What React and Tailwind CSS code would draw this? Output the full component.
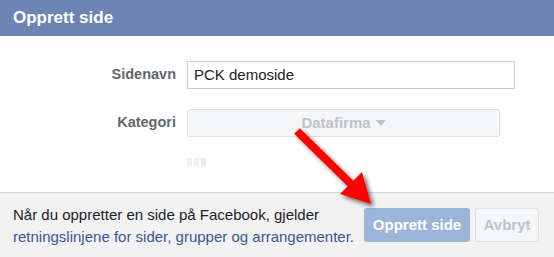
import React from 'react';

const Arrow = () => (
  <svg className="absolute left-0 top-0 pointer-events-none" width="554" height="257" viewBox="0 0 554 257">
    <defs>
      <filter id="arrowShadow" x="-20%" y="-20%" width="160%" height="160%">
        <feDropShadow dx="3" dy="3" stdDeviation="2" floodColor="#000" floodOpacity="0.55" />
      </filter>
    </defs>
    <g filter="url(#arrowShadow)">
      <line x1="297" y1="131" x2="352" y2="185" stroke="#ff0000" strokeWidth="8" />
      <polygon points="371,204 340,194 362,172" fill="#ff0000" />
    </g>
  </svg>
);

const App = () => {
  return (
    <div
      className="relative w-[554px] h-[257px] bg-white overflow-hidden flex flex-col"
      style={{ fontFamily: '"Liberation Sans", Arial, sans-serif' }}
    >
      <div className="h-[36px] bg-[#6d84b4] px-[13px] flex items-center text-white font-bold text-[17px]">
        Opprett side
      </div>

      <div className="flex-1 flex flex-col pt-[25px]">
        <div className="flex items-center h-[28px]">
          <div className="w-[176px] text-right font-bold text-[14.5px] text-[#606770]">Sidenavn</div>
          <div className="ml-[11px] w-[328px] h-[28px] border border-[#ccd0d5] flex items-center px-[6px] text-[15px] text-[#1d2129]">
            PCK demoside
          </div>
        </div>

        <div className="flex items-center h-[28px] mt-[20px]">
          <div className="w-[176px] text-right font-bold text-[14.5px] text-[#606770]">Kategori</div>
          <div className="ml-[11px] w-[313px] h-[28px] border border-[#dddfe2] rounded-[3px] bg-[#f5f6f7] flex items-center justify-center gap-[5px] text-[15px] font-bold text-[#bec3c9]">
            Datafirma
            <span className="w-0 h-0 border-l-[5px] border-r-[5px] border-t-[6px] border-l-transparent border-r-transparent border-t-[#bec3c9]" />
          </div>
        </div>

        <div className="flex gap-[2px] ml-[187px] mt-[21px]">
          <span className="w-[5px] h-[8px] bg-[#eef0f5]" />
          <span className="w-[5px] h-[8px] bg-[#eef0f5]" />
          <span className="w-[5px] h-[8px] bg-[#e4e8f1]" />
        </div>
      </div>

      <div className="h-[65px] border-t border-[#d3d3d3] bg-[#f2f2f2] flex items-start px-[13px] pt-[11px]">
        <div className="text-[15px] leading-[22px] flex-1">
          <div className="text-[#1d2129]">Når du oppretter en side på Facebook, gjelder</div>
          <div className="text-[#365899]">retningslinjene for sider, grupper og arrangementer.</div>
        </div>
        <div className="flex gap-[5px] mt-[4px] mr-[2px]">
          <div className="w-[106px] h-[34px] rounded-[3px] bg-[#9cb4d8] text-white font-bold text-[15px] flex items-center justify-center">
            Opprett side
          </div>
          <div className="w-[64px] h-[34px] rounded-[3px] border border-[#dddfe2] bg-[#f5f6f7] text-[#bec3c9] font-bold text-[15px] flex items-center justify-center">
            Avbryt
          </div>
        </div>
      </div>

      <Arrow />
    </div>
  );
};

export default App;
